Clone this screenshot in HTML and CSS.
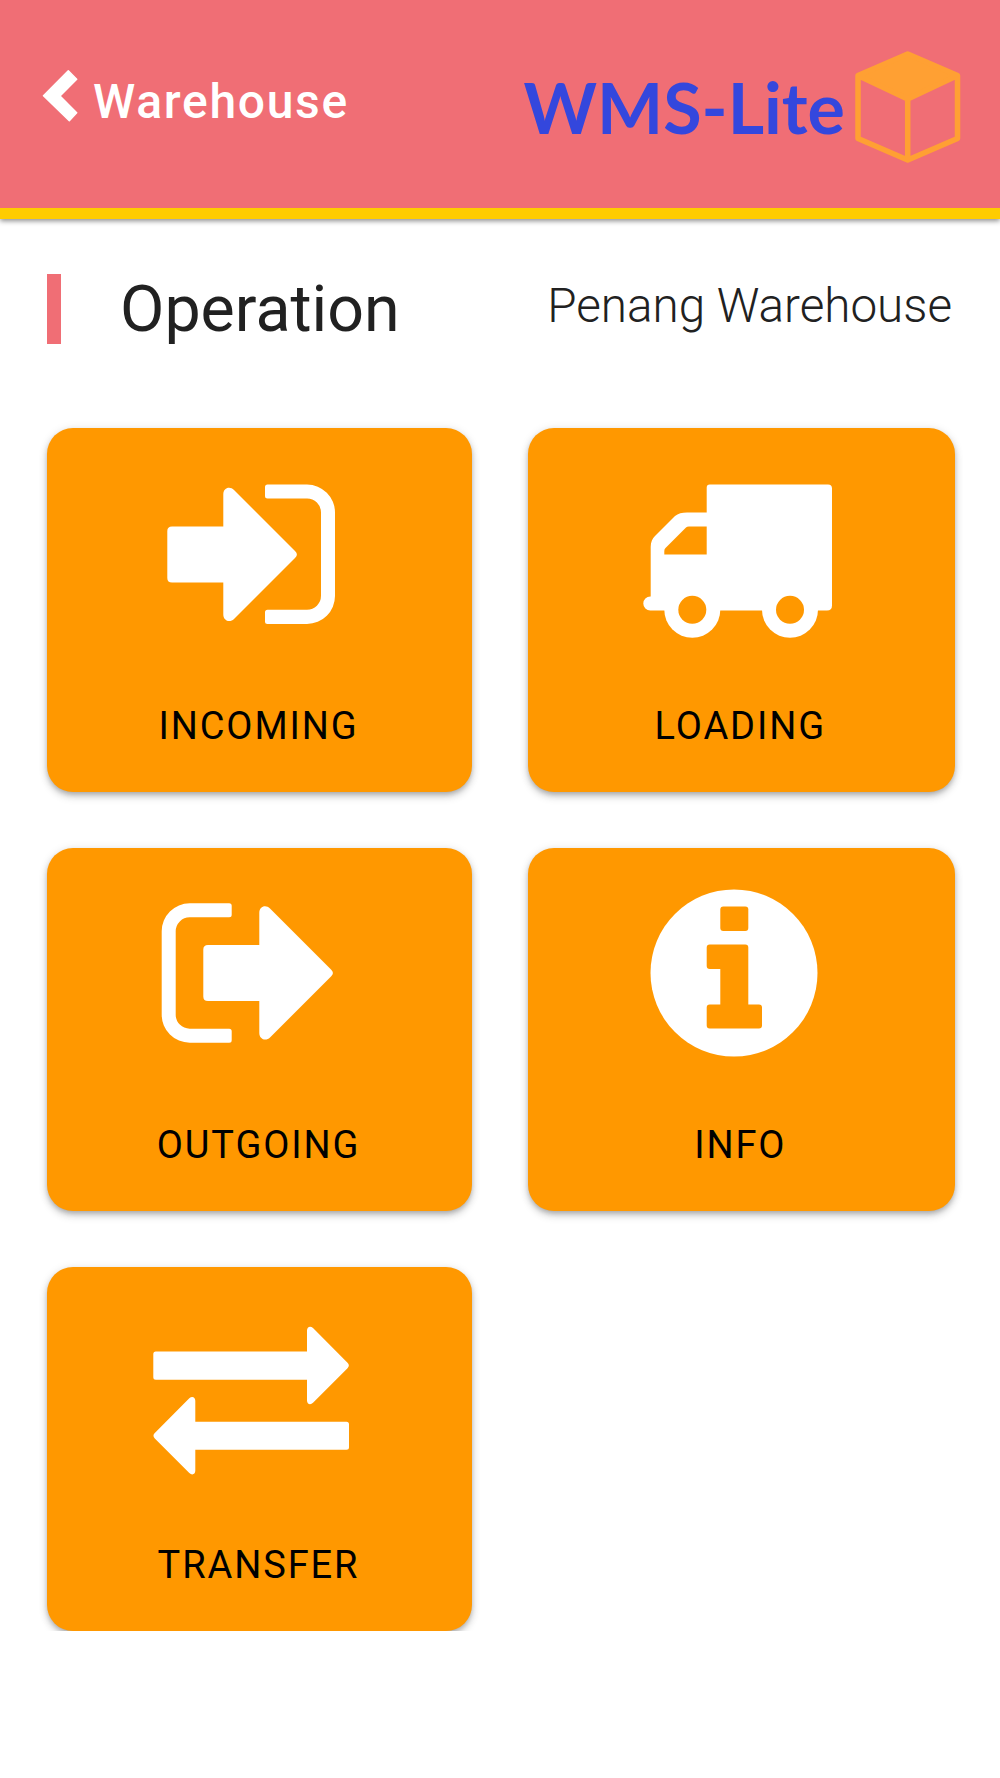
FILE: index.html
```html
<!DOCTYPE html>
<html lang="en">
<head>
  <meta charset="UTF-8" />
  <title>WMS-Lite Operation</title>
  <link rel="stylesheet" href="styles.css">
</head>
<body>
  <!-- Header -->
  <div class="header">
    <div class="back">
      <svg class="back-icon" width="36" height="52" viewBox="0 0 36 52">
        <path d="M1.5 25.7 L26.3 0.9 L34.7 9.3 L18 26 L34.7 42.7 L27.3 50.7 Z" />
      </svg>
      <span class="back-text">Warehouse</span>
    </div>
    <div class="logo">
      <span class="logo-text">WMS-Lite</span>
      <svg class="logo-cube" width="108" height="116" viewBox="0 0 108 116">
        <path class="cube-top" d="M53.7 5 L103.5 26.5 L53.7 50 L4 26.5 Z" />
        <path class="cube-line" d="M53.7 5 L103.5 26.5 V89.5 L53.7 111 L4 89.5 V26.5 Z M4 26.5 L53.7 50 L103.5 26.5 M53.7 50 V111" />
      </svg>
    </div>
  </div>

  <!-- Title row -->
  <div class="title-row">
    <div class="title-left">
      <div class="accent"></div>
      <h1 class="title">Operation</h1>
    </div>
    <p class="location">Penang Warehouse</p>
  </div>

  <!-- Menu -->
  <div class="menu">
    <div class="card">
      <svg class="card-icon" viewBox="0 0 200 200">
        <path d="M20 72.5 H71.3 V40.5 C71.3 33.5 78 32 82 36 L143 97 C145.5 99.5 145.5 101.5 143 104 L82 165 C78 169 71.3 167 71.3 160.5 V128.5 H20 Q15.3 128.5 15.3 124 V77 Q15.3 72.5 20 72.5 Z" />
        <path d="M115.5 30.5 H155 A28 28 0 0 1 183 58.5 V142 A28 28 0 0 1 155 170 H115.5 Q113 170 113 167.5 V158.3 Q113 155.8 115.5 155.8 H155 A14 14 0 0 0 169 141.8 V58.5 A14 14 0 0 0 155 44.5 H115.5 Q113 44.5 113 42 V33 Q113 30.5 115.5 30.5 Z" />
      </svg>
      <div class="card-label">INCOMING</div>
    </div>

    <div class="card">
      <svg class="card-icon" viewBox="0 0 200 200">
        <path fill-rule="evenodd" d="M75.7 30.5 H194 Q198 30.5 198 34.5 V151.5 Q198 156.5 193 156.5 H16.3 A7 7 0 0 1 16.3 142.5 H16.7 V93 C16.7 88 18.5 84.5 21 82 L41 62 C44 59.5 48 58.5 53 58.5 H72.7 V33.5 Q72.7 30.5 75.7 30.5 Z M72.7 72.5 H55 Q53 72.5 52 73.5 L31.5 94 Q30.3 95.2 30.3 97 V100.5 H72.7 Z" />
        <circle cx="58.3" cy="155.8" r="28" />
        <circle cx="156" cy="155.8" r="28" />
        <circle class="hole" cx="58.3" cy="155.8" r="14" />
        <circle class="hole" cx="156" cy="155.8" r="14" />
      </svg>
      <div class="card-label">LOADING</div>
    </div>

    <div class="card">
      <svg class="card-icon" viewBox="0 0 200 200">
        <path d="M56 72 H107.3 V40 C107.3 33 114 31.5 118 35.5 L179 96.5 C181.5 99 181.5 101 179 103.5 L118 164.5 C114 168.5 107.3 166.5 107.3 160 V128 H56 Q51.3 128 51.3 123.5 V76.5 Q51.3 72 56 72 Z" />
        <path d="M77.2 30.3 H37.7 A28 28 0 0 0 9.7 58.3 V141.7 A28 28 0 0 0 37.7 169.7 H77.2 Q79.7 169.7 79.7 167.2 V158.2 Q79.7 155.7 77.2 155.7 H37.7 A14 14 0 0 1 23.7 141.7 V58.3 A14 14 0 0 1 37.7 44.3 H77.2 Q79.7 44.3 79.7 41.8 V32.8 Q79.7 30.3 77.2 30.3 Z" />
      </svg>
      <div class="card-label">OUTGOING</div>
    </div>

    <div class="card">
      <svg class="card-icon" viewBox="0 0 200 200">
        <circle cx="100" cy="100" r="83.5" />
        <rect class="hole" x="86.3" y="33.5" width="28" height="24.5" rx="3" />
        <path class="hole" d="M75.7 71.5 H111.3 Q114.3 71.5 114.3 74.5 V131.5 H125 Q128 131.5 128 134.5 V152.5 Q128 155.5 125 155.5 H75.7 Q72.7 155.5 72.7 152.5 V134.5 Q72.7 131.5 75.7 131.5 H86.3 V96 H75.7 Q72.7 96 72.7 93 V74.5 Q72.7 71.5 75.7 71.5 Z" />
      </svg>
      <div class="card-label">INFO</div>
    </div>

    <div class="card">
      <svg class="card-icon" viewBox="0 0 200 200">
        <path d="M3.8 58.5 H155 V37.5 C155 33.5 158.5 32.5 161 35 L195.5 69.8 C197.3 71.6 197.3 73.4 195.5 75.2 L161 109.8 C158.5 112.3 155 111.3 155 107.5 V86.8 H3.8 Q1.3 86.8 1.3 84.3 V61 Q1.3 58.5 3.8 58.5 Z" />
        <path d="M194.5 128.8 H43.3 V107.8 C43.3 103.8 39.8 102.8 37.3 105.3 L2.8 140 C1 141.8 1 143.6 2.8 145.4 L37.3 180 C39.8 182.5 43.3 181.5 43.3 177.8 V156.8 H194.5 Q197 156.8 197 154.3 V131.3 Q197 128.8 194.5 128.8 Z" />
      </svg>
      <div class="card-label">TRANSFER</div>
    </div>
  </div>
</body>
</html>
```

FILE: styles.css
```css
* {
  margin: 0;
  padding: 0;
  box-sizing: border-box;
  font-family: 'Roboto', sans-serif;
}

body {
  background-color: #FFFFFF;
  color: #212121;
  overflow-x: hidden;
}

.header {
  height: 218.5px;
  background-color: #F06E75;
  border-bottom: 11px solid #FFCC00;
  box-shadow: 0 2px 5px rgba(0, 0, 0, 0.45);
  padding: 0 38px 0 42px;
  display: flex;
  justify-content: space-between;
  align-items: center;
}

.back {
  display: flex;
  align-items: center;
  gap: 15px;
  margin-bottom: 4px;
}

.back-icon {
  margin-bottom: 12px;
  fill: #FFFFFF;
  stroke: #FFFFFF;
  stroke-width: 1.5;
  stroke-linejoin: round;
}

.back-text {
  font-size: 48px;
  font-weight: 500;
  letter-spacing: 1.7px;
  color: #FFFFFF;
}

.logo {
  display: flex;
  align-items: center;
  gap: 9px;
  margin-top: 6px;
}

.logo-text {
  font-family: 'Lato', sans-serif;
  font-size: 70px;
  font-weight: 700;
  color: #3447DD;
}

.cube-top {
  fill: #FFA033;
}

.cube-line {
  fill: none;
  stroke: #FFA033;
  stroke-width: 5.5;
  stroke-linejoin: round;
}

.title-row {
  display: flex;
  justify-content: space-between;
  align-items: center;
  padding: 55.5px 48px 0 47px;
}

.title-left {
  display: flex;
  align-items: center;
  gap: 59px;
}

.accent {
  width: 14px;
  height: 70px;
  background-color: #F06E75;
}

.title {
  font-size: 64.5px;
  font-weight: 400;
  line-height: 66px;
  color: #212121;
}

.location {
  font-size: 47.6px;
  font-weight: 300;
  line-height: 56px;
  margin-bottom: 7px;
  color: #212121;
}

.menu {
  display: grid;
  grid-template-columns: 425px 427.5px;
  grid-auto-rows: 363.5px;
  column-gap: 55.5px;
  row-gap: 56px;
  padding: 84px 45px 0 47px;
}

.card {
  background-color: #FF9800;
  border-radius: 26px;
  box-shadow: 0 3px 5px -1px rgba(0, 0, 0, 0.2), 0 5px 8px 0 rgba(0, 0, 0, 0.14), 0 1px 10px 0 rgba(0, 0, 0, 0.1);
  padding-top: 25.5px;
  display: flex;
  flex-direction: column;
  align-items: center;
}

.card-icon {
  width: 200px;
  height: 200px;
  margin-left: -15px;
  fill: #FFFFFF;
}

.card-icon .hole {
  fill: #FF9800;
}

.card-label {
  margin-top: 50px;
  margin-right: 2px;
  font-size: 38px;
  letter-spacing: 1.9px;
  color: #000000;
}
```
